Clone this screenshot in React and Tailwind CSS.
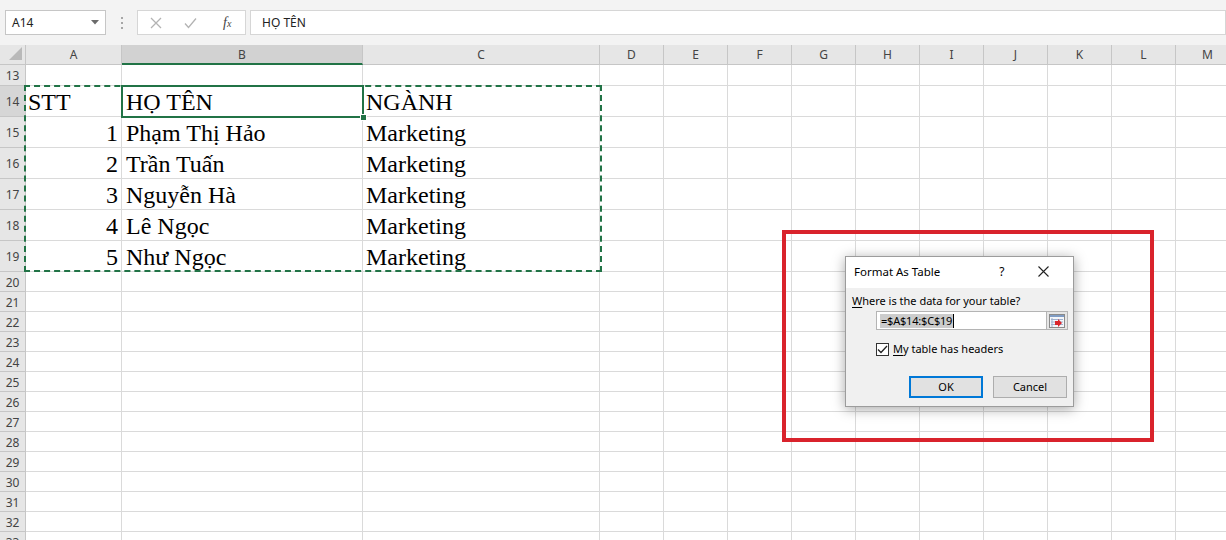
import React from 'react';

const COLS = [
  { k: 'A', w: 'w-[96px]' },
  { k: 'B', w: 'w-[241px]' },
  { k: 'C', w: 'w-[237px]' },
  { k: 'D', w: 'w-[64px]' },
  { k: 'E', w: 'w-[64px]' },
  { k: 'F', w: 'w-[64px]' },
  { k: 'G', w: 'w-[64px]' },
  { k: 'H', w: 'w-[64px]' },
  { k: 'I', w: 'w-[64px]' },
  { k: 'J', w: 'w-[64px]' },
  { k: 'K', w: 'w-[64px]' },
  { k: 'L', w: 'w-[64px]' },
  { k: 'M', w: 'w-[64px]' },
];

const DATA = {
  14: ['STT', 'HỌ TÊN', 'NGÀNH'],
  15: ['1', 'Phạm Thị Hảo', 'Marketing'],
  16: ['2', 'Trần Tuấn', 'Marketing'],
  17: ['3', 'Nguyễn Hà', 'Marketing'],
  18: ['4', 'Lê Ngọc', 'Marketing'],
  19: ['5', 'Như Ngọc', 'Marketing'],
};

const ROWS = [];
for (let r = 13; r <= 33; r++) ROWS.push(r);

function rowHeight(r) {
  if (r === 13) return 'h-[21px]';
  if (r >= 14 && r <= 19) return 'h-[31px]';
  return 'h-[20px]';
}

function Toolbar() {
  return (
    <div className="h-[45px] shrink-0 bg-[#f3f3f3] flex items-start pt-[10px] font-['Noto_Sans',sans-serif] text-[12px] text-[#222]">
      <div className="ml-[5px] w-[101px] h-[25px] bg-white border border-[#c6c6c6] flex items-center justify-between pl-[6px] pr-[6px]">
        <span>A14</span>
        <svg width="8" height="5" viewBox="0 0 8 5"><path d="M0 0 L8 0 L4 4.5 Z" fill="#6b6b6b" /></svg>
      </div>
      <div className="w-[31px] h-[25px] flex flex-col items-center justify-center gap-[3px]">
        <div className="w-[2px] h-[2px] bg-[#a6a6a6]" />
        <div className="w-[2px] h-[2px] bg-[#a6a6a6]" />
        <div className="w-[2px] h-[2px] bg-[#a6a6a6]" />
      </div>
      <div className="w-[109px] h-[25px] bg-white border border-[#d6d6d6] flex items-center pl-[12px]">
        <svg width="12" height="12" viewBox="0 0 12 12"><path d="M1 1 L11 11 M11 1 L1 11" stroke="#b3b3b3" strokeWidth="1.3" fill="none" /></svg>
        <svg className="ml-[22px]" width="13" height="12" viewBox="0 0 13 12"><path d="M1 6.5 L4.5 10.5 L12 1.5" stroke="#b3b3b3" strokeWidth="1.3" fill="none" /></svg>
        <span className="ml-[26px] font-['Liberation_Serif',serif] italic text-[14px] text-[#444] leading-none">f<span className="text-[10px]">x</span></span>
      </div>
      <div className="ml-[4px] flex-1 h-[25px] bg-white border border-[#d6d6d6] flex items-center pl-[11px]">
        <span>HỌ TÊN</span>
      </div>
    </div>
  );
}

function HeaderRow() {
  return (
    <div className="flex shrink-0 h-[20px] font-['Noto_Sans',sans-serif] text-[12px] text-[#444]">
      <div className="w-[26px] shrink-0 bg-[#e6e6e6] border-r border-b border-[#c6c6c6] flex items-end justify-end pr-[3px] pb-[4px]">
        <svg width="13" height="13" viewBox="0 0 13 13"><path d="M13 0 L13 13 L0 13 Z" fill="#b9b9b9" /></svg>
      </div>
      {COLS.map((c) =>
        c.k === 'B' ? (
          <div key={c.k} className={`${c.w} shrink-0 bg-[#d2d2d2] border-r border-[#c6c6c6] border-b-2 border-b-[#217346] flex items-center justify-center pt-[1px]`}>{c.k}</div>
        ) : (
          <div key={c.k} className={`${c.w} shrink-0 bg-[#e6e6e6] border-r border-b border-[#c6c6c6] flex items-center justify-center pt-[1px]`}>{c.k}</div>
        )
      )}
    </div>
  );
}

function Row({ r }) {
  const d = DATA[r];
  const labelCls = r === 14 ? 'bg-[#d6d6d6] text-[#444]' : 'bg-[#e6e6e6] text-[#444]';
  return (
    <div className={`flex shrink-0 ${rowHeight(r)}`}>
      <div className={`w-[26px] shrink-0 border-r border-b border-[#c6c6c6] flex items-center justify-center pt-[2px] font-['Noto_Sans',sans-serif] text-[12px] ${labelCls}`}>{r}</div>
      {COLS.map((c, i) => {
        let content = null;
        let align = 'justify-start';
        let pad = 'px-[3px]';
        if (d && i < 3) {
          content = d[i];
          if (i === 0) {
            if (r === 14) pad = 'pl-[2px]';
            else align = 'justify-end';
          }
          if (i === 1) pad = 'pl-[4px]';
        }
        return (
          <div
            key={c.k}
            className={`${c.w} shrink-0 border-r border-b border-[#dadada] bg-white flex items-end ${align} ${pad} pb-[2px] font-['Liberation_Serif',serif] text-[24px] leading-none text-black whitespace-nowrap`}
          >
            {content}
          </div>
        );
      })}
    </div>
  );
}

function RangeIcon() {
  return (
    <svg width="16" height="14" viewBox="0 0 16 14">
      <rect x="0.5" y="0.5" width="15" height="13" fill="#f4f6fa" stroke="#8a8a8a" />
      <rect x="1" y="1" width="14" height="2" fill="#7f9cc4" />
      <path d="M2 5.5 H14 M2 8 H14 M2 10.5 H14" stroke="#9fb2cf" strokeWidth="1" />
      <path d="M3 4 L3 13" stroke="#9fb2cf" strokeWidth="1" />
      <path d="M6 7 L9 7 L9 5 L13 9 L9 13 L9 11 L6 11 Z" fill="#d9262c" />
    </svg>
  );
}

function Dialog() {
  return (
    <div className="absolute left-[845px] top-[256px] w-[229px] h-[151px] border border-[#9c9c9c] bg-[#f0f0f0] shadow-[0_2px_12px_rgba(0,0,0,0.35)] flex flex-col font-['Noto_Sans',sans-serif] text-[11px] text-black">
      <div className="h-[31px] shrink-0 bg-white flex items-center pl-[8px] pb-[2px]">
        <span className="text-[11.5px]">Format As Table</span>
        <span className="ml-[59px] text-[12px]">?</span>
        <svg className="ml-[33px]" width="11" height="11" viewBox="0 0 11 11"><path d="M0.5 0.5 L10.5 10.5 M10.5 0.5 L0.5 10.5" stroke="#222" strokeWidth="1.1" fill="none" /></svg>
      </div>
      <div className="flex-1 flex flex-col pl-[6px] pr-[6px] pt-[5px]">
        <div className="h-[16px] leading-[16px]"><span className="underline underline-offset-2">W</span>here is the data for your table?</div>
        <div className="mt-[2px] ml-[24px] flex h-[19px] w-[192px] border border-[#b4b4b4] bg-white">
          <div className="flex-1 flex items-center pl-[3px]">
            <span className="bg-[#cccccc] leading-[14px] px-[1px] tracking-[-0.2px]">=$A$14:$C$19</span>
            <div className="w-[1px] h-[14px] bg-black" />
          </div>
          <div className="w-[21px] shrink-0 bg-[#e6e6e6] border-l border-[#b4b4b4] flex items-center justify-center">
            <RangeIcon />
          </div>
        </div>
        <div className="mt-[12px] ml-[24px] flex items-center h-[14px]">
          <div className="w-[13px] h-[13px] border border-[#333] bg-white flex items-center justify-center">
            <svg width="11" height="9" viewBox="0 0 11 9"><path d="M1 4.5 L4 7.5 L10 1" stroke="#222" strokeWidth="1.3" fill="none" /></svg>
          </div>
          <span className="ml-[4px]"><span className="underline underline-offset-2">M</span>y table has headers</span>
        </div>
        <div className="mt-[20px] flex justify-end gap-[10px]">
          <div className="w-[74px] h-[22px] border-2 border-[#0078d7] bg-[#e1e1e1] flex items-center justify-center">OK</div>
          <div className="w-[74px] h-[22px] border border-[#adadad] bg-[#e1e1e1] flex items-center justify-center">Cancel</div>
        </div>
      </div>
    </div>
  );
}

export default function App() {
  return (
    <div className="relative w-[1226px] h-[540px] overflow-hidden bg-white flex flex-col">
      <Toolbar />
      <HeaderRow />
      {ROWS.map((r) => (
        <Row key={r} r={r} />
      ))}
      <div className="absolute left-[24px] top-[85px] w-[578px] h-[187px] border-2 border-dashed border-[#217346] pointer-events-none" />
      <div className="absolute left-[121px] top-[85px] w-[243px] h-[33px] border-2 border-[#217346] pointer-events-none" />
      <div className="absolute left-[360px] top-[114px] w-[7px] h-[7px] bg-[#217346] border border-white" />
      <div className="absolute left-[782px] top-[230px] w-[372px] h-[212px] border-4 border-[#d9232c]" />
      <Dialog />
    </div>
  );
}
